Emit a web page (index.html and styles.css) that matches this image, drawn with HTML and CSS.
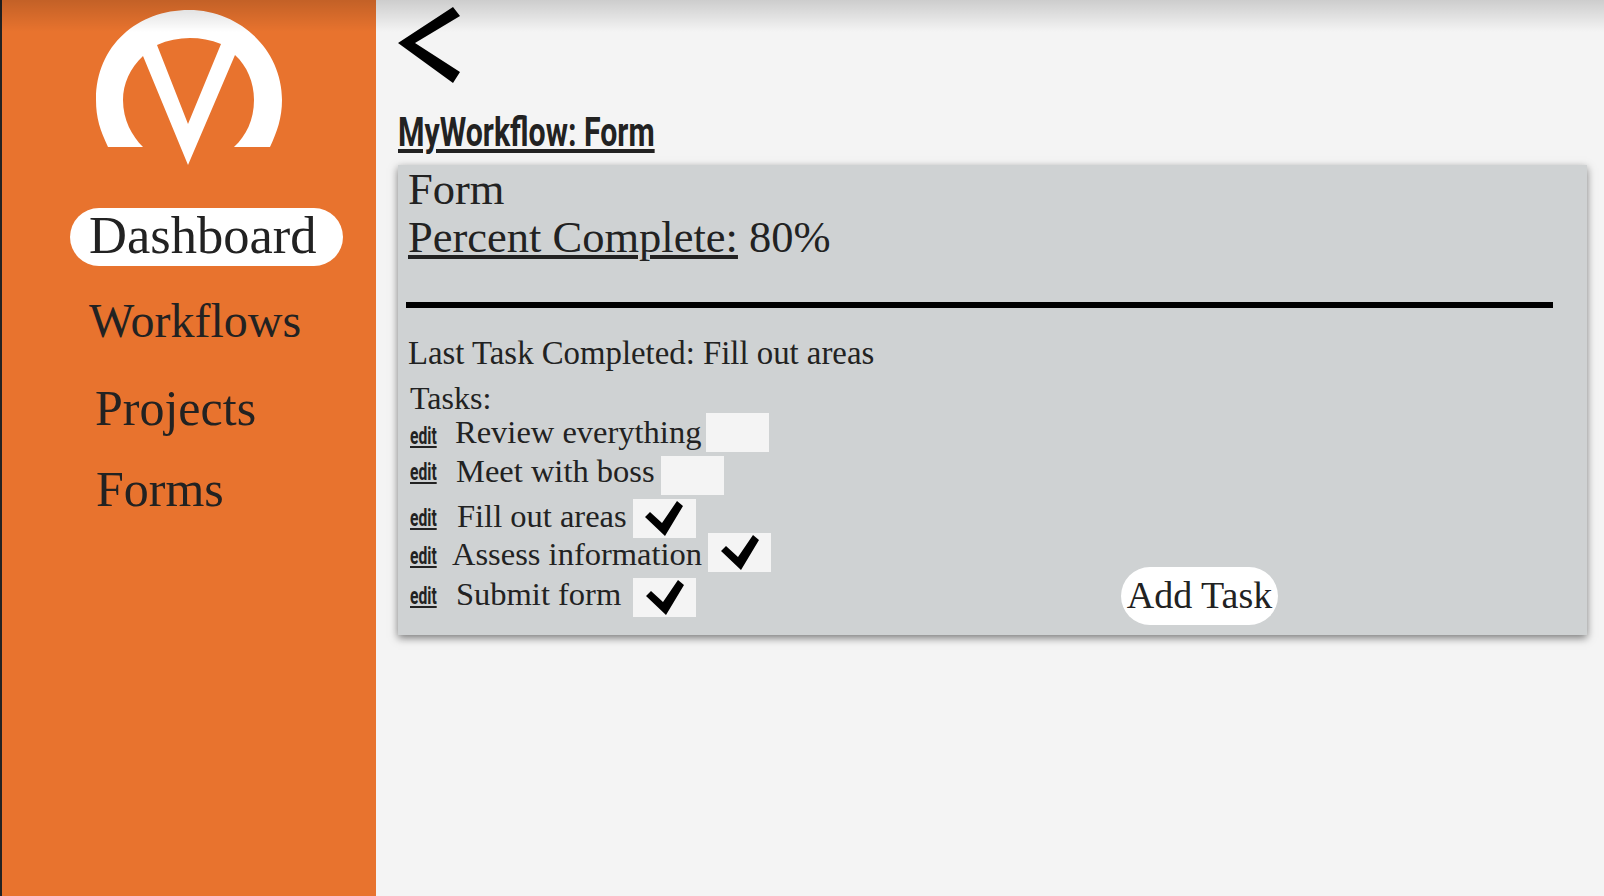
FILE: index.html
```html
<!DOCTYPE html>
<html lang="en">
<head>
    <meta charset="UTF-8">
    <meta name="viewport" content="width=device-width, initial-scale=1.0">
    <title>MyWorkflow: Form</title>
    <link rel="stylesheet" href="styles.css">
</head>
<body>
    <div class="top-shade"></div>

    <aside class="sidebar">
        <svg class="logo" viewBox="96 10 186 156" width="186" height="156">
            <path fill="#fff" fill-rule="evenodd" d="M108 147 C100 130 96 118 96 100 C96 45 138 10 189 10 C240 10 282 50 282 100 C282 118 277 132 270 147 L234 147 C246 136 254 120 254 100 C254 82 247 66 235 55 L188 165 L143 56 C130 68 123 84 123 100 C123 120 132 136 143 147 Z M157 45 L188 124 L221 44 C200 36 178 36 157 45 Z"/>
        </svg>
        <nav class="nav">
            <a class="nav-item active">Dashboard</a>
            <a class="nav-item workflows">Workflows</a>
            <a class="nav-item projects">Projects</a>
            <a class="nav-item forms">Forms</a>
        </nav>
    </aside>

    <main class="content">
        <svg class="back" viewBox="398 7 62 76" width="62" height="76">
            <polygon fill="#000" points="453,7 460,16 415,43 460,72 453,83 398,43"/>
        </svg>
        <h1 class="page-title">MyWorkflow: Form</h1>

        <section class="card">
            <div class="card-title">Form</div>
            <div class="percent"><u>Percent Complete:</u> 80%</div>
            <hr class="divider">
            <div class="last-task">Last Task Completed: Fill out areas</div>
            <div class="tasks-label">Tasks:</div>

            <div class="task-area">
                <ul class="tasks">
                    <li class="task t1">
                        <a class="edit">edit</a>
                        <span class="task-name">Review everything</span>
                        <span class="box"></span>
                    </li>
                    <li class="task t2">
                        <a class="edit">edit</a>
                        <span class="task-name">Meet with boss</span>
                        <span class="box"></span>
                    </li>
                    <li class="task t3">
                        <a class="edit">edit</a>
                        <span class="task-name">Fill out areas</span>
                        <span class="box"><svg class="check" viewBox="0 0 38 35" width="38" height="35"><polygon fill="#000" points="0,16 5,11 17,22 32,0 38,5 20,35"/></svg></span>
                    </li>
                    <li class="task t4">
                        <a class="edit">edit</a>
                        <span class="task-name">Assess information</span>
                        <span class="box"><svg class="check" viewBox="0 0 38 35" width="38" height="35"><polygon fill="#000" points="0,16 5,11 17,22 32,0 38,5 20,35"/></svg></span>
                    </li>
                    <li class="task t5">
                        <a class="edit">edit</a>
                        <span class="task-name">Submit form</span>
                        <span class="box"><svg class="check" viewBox="0 0 38 35" width="38" height="35"><polygon fill="#000" points="0,16 5,11 17,22 32,0 38,5 20,35"/></svg></span>
                    </li>
                </ul>
                <button class="add-task">Add Task</button>
            </div>
        </section>
    </main>
</body>
</html>
```

FILE: styles.css
```css
* {
    box-sizing: border-box;
}

html, body {
    height: 100%;
}

body {
    margin: 0;
    padding-left: 2px;
    display: flex;
    overflow: hidden;
    background-color: #222;
    color: #222;
    font-family: "Liberation Serif", serif;
}

.top-shade {
    position: absolute;
    top: 0;
    left: 0;
    right: 0;
    height: 32px;
    background: linear-gradient(rgba(0, 0, 0, 0.16), rgba(0, 0, 0, 0));
    pointer-events: none;
}

/* sidebar */
.sidebar {
    width: 374px;
    height: 100%;
    flex-shrink: 0;
    padding-top: 10px;
    background-color: #e8732e;
}

.logo {
    display: block;
    margin-left: 94px;
}

.nav {
    display: flex;
    flex-direction: column;
    align-items: flex-start;
    margin-top: 42px;
}

.nav-item {
    font-size: 50px;
    line-height: 58px;
}

.active {
    width: 273px;
    height: 58px;
    margin-left: 68px;
    padding-left: 19px;
    border-radius: 29px;
    background: white;
    font-size: 52.5px;
    line-height: 54px;
}

.workflows {
    margin: 26px 0 0 87px;
    font-size: 48px;
}

.projects {
    margin: 29px 0 0 93px;
}

.forms {
    margin: 23px 0 0 94px;
}

/* main */
.content {
    flex: 1;
    height: 100%;
    padding: 7px 17px 0 22px;
    background-color: #f4f4f4;
}

.back {
    display: block;
}

.page-title {
    margin: 26px 0 0;
    width: 370px;
    font-family: Roboto, sans-serif;
    font-size: 41px;
    line-height: 47px;
    font-weight: 700;
    text-decoration: underline;
    white-space: nowrap;
    transform: scaleX(0.738);
    transform-origin: left;
}

.card {
    height: 470px;
    margin-top: 9px;
    padding: 0 34px 0 10px;
    background-color: #cfd2d3;
    box-shadow: 0 3px 8px rgba(0, 0, 0, 0.5);
}

.card-title {
    font-size: 44.5px;
    line-height: 48px;
}

.percent {
    font-size: 44.5px;
    line-height: 48px;
}

.divider {
    height: 6px;
    margin: 41px 0 0 -2px;
    border: none;
    background: #000;
}

.last-task {
    margin: 25px 0 0 0;
    font-size: 32.8px;
    line-height: 40px;
}

.tasks-label {
    margin: 6px 0 0 2px;
    font-size: 32px;
    line-height: 38px;
}

.task-area {
    display: flex;
    align-items: flex-end;
}

.tasks {
    width: 713px;
    list-style-type: none;
    margin: 0;
    padding: 0 0 0 2px;
}

.task {
    display: flex;
    align-items: center;
    height: 39px;
    font-size: 32.5px;
}

.edit {
    width: 28px;
    font-family: Roboto, sans-serif;
    font-size: 23px;
    font-weight: 700;
    text-decoration: underline;
    transform: scaleX(0.68);
    transform-origin: left;
}

.task-name {
    margin-left: 17px;
    margin-right: 5px;
}

.box {
    display: flex;
    align-items: center;
    justify-content: center;
    width: 63px;
    height: 39px;
    background: #f4f4f4;
}

.t1 {
    margin-top: -4px;
}

.t1 .edit {
    margin-top: 7px;
}

.t2 {
    margin-top: 4px;
}

.t2 .edit {
    margin-bottom: 7px;
}

.t2 .task-name {
    margin-left: 18px;
    margin-right: 6px;
    margin-bottom: 8px;
}

.t3 {
    margin-top: 4px;
}

.t3 .task-name {
    margin-left: 19px;
    margin-right: 6px;
    margin-bottom: 4px;
}

.t4 {
    margin-top: -5px;
}

.t4 .edit {
    margin-top: 7px;
}

.t4 .task-name {
    margin-left: 14px;
    margin-right: 6px;
    margin-top: 4px;
}

.t5 {
    margin-top: 6px;
}

.t5 .edit {
    margin-bottom: 3px;
}

.t5 .task-name {
    margin-left: 18px;
    margin-right: 12px;
    margin-bottom: 6px;
}

.add-task {
    height: 58px;
    width: 157px;
    margin: 0 0 -8px 0;
    padding: 0 0 2px;
    border: none;
    border-radius: 29px;
    background: white;
    color: #222;
    font-family: "Liberation Serif", serif;
    font-size: 38px;
    cursor: pointer;
}
```
